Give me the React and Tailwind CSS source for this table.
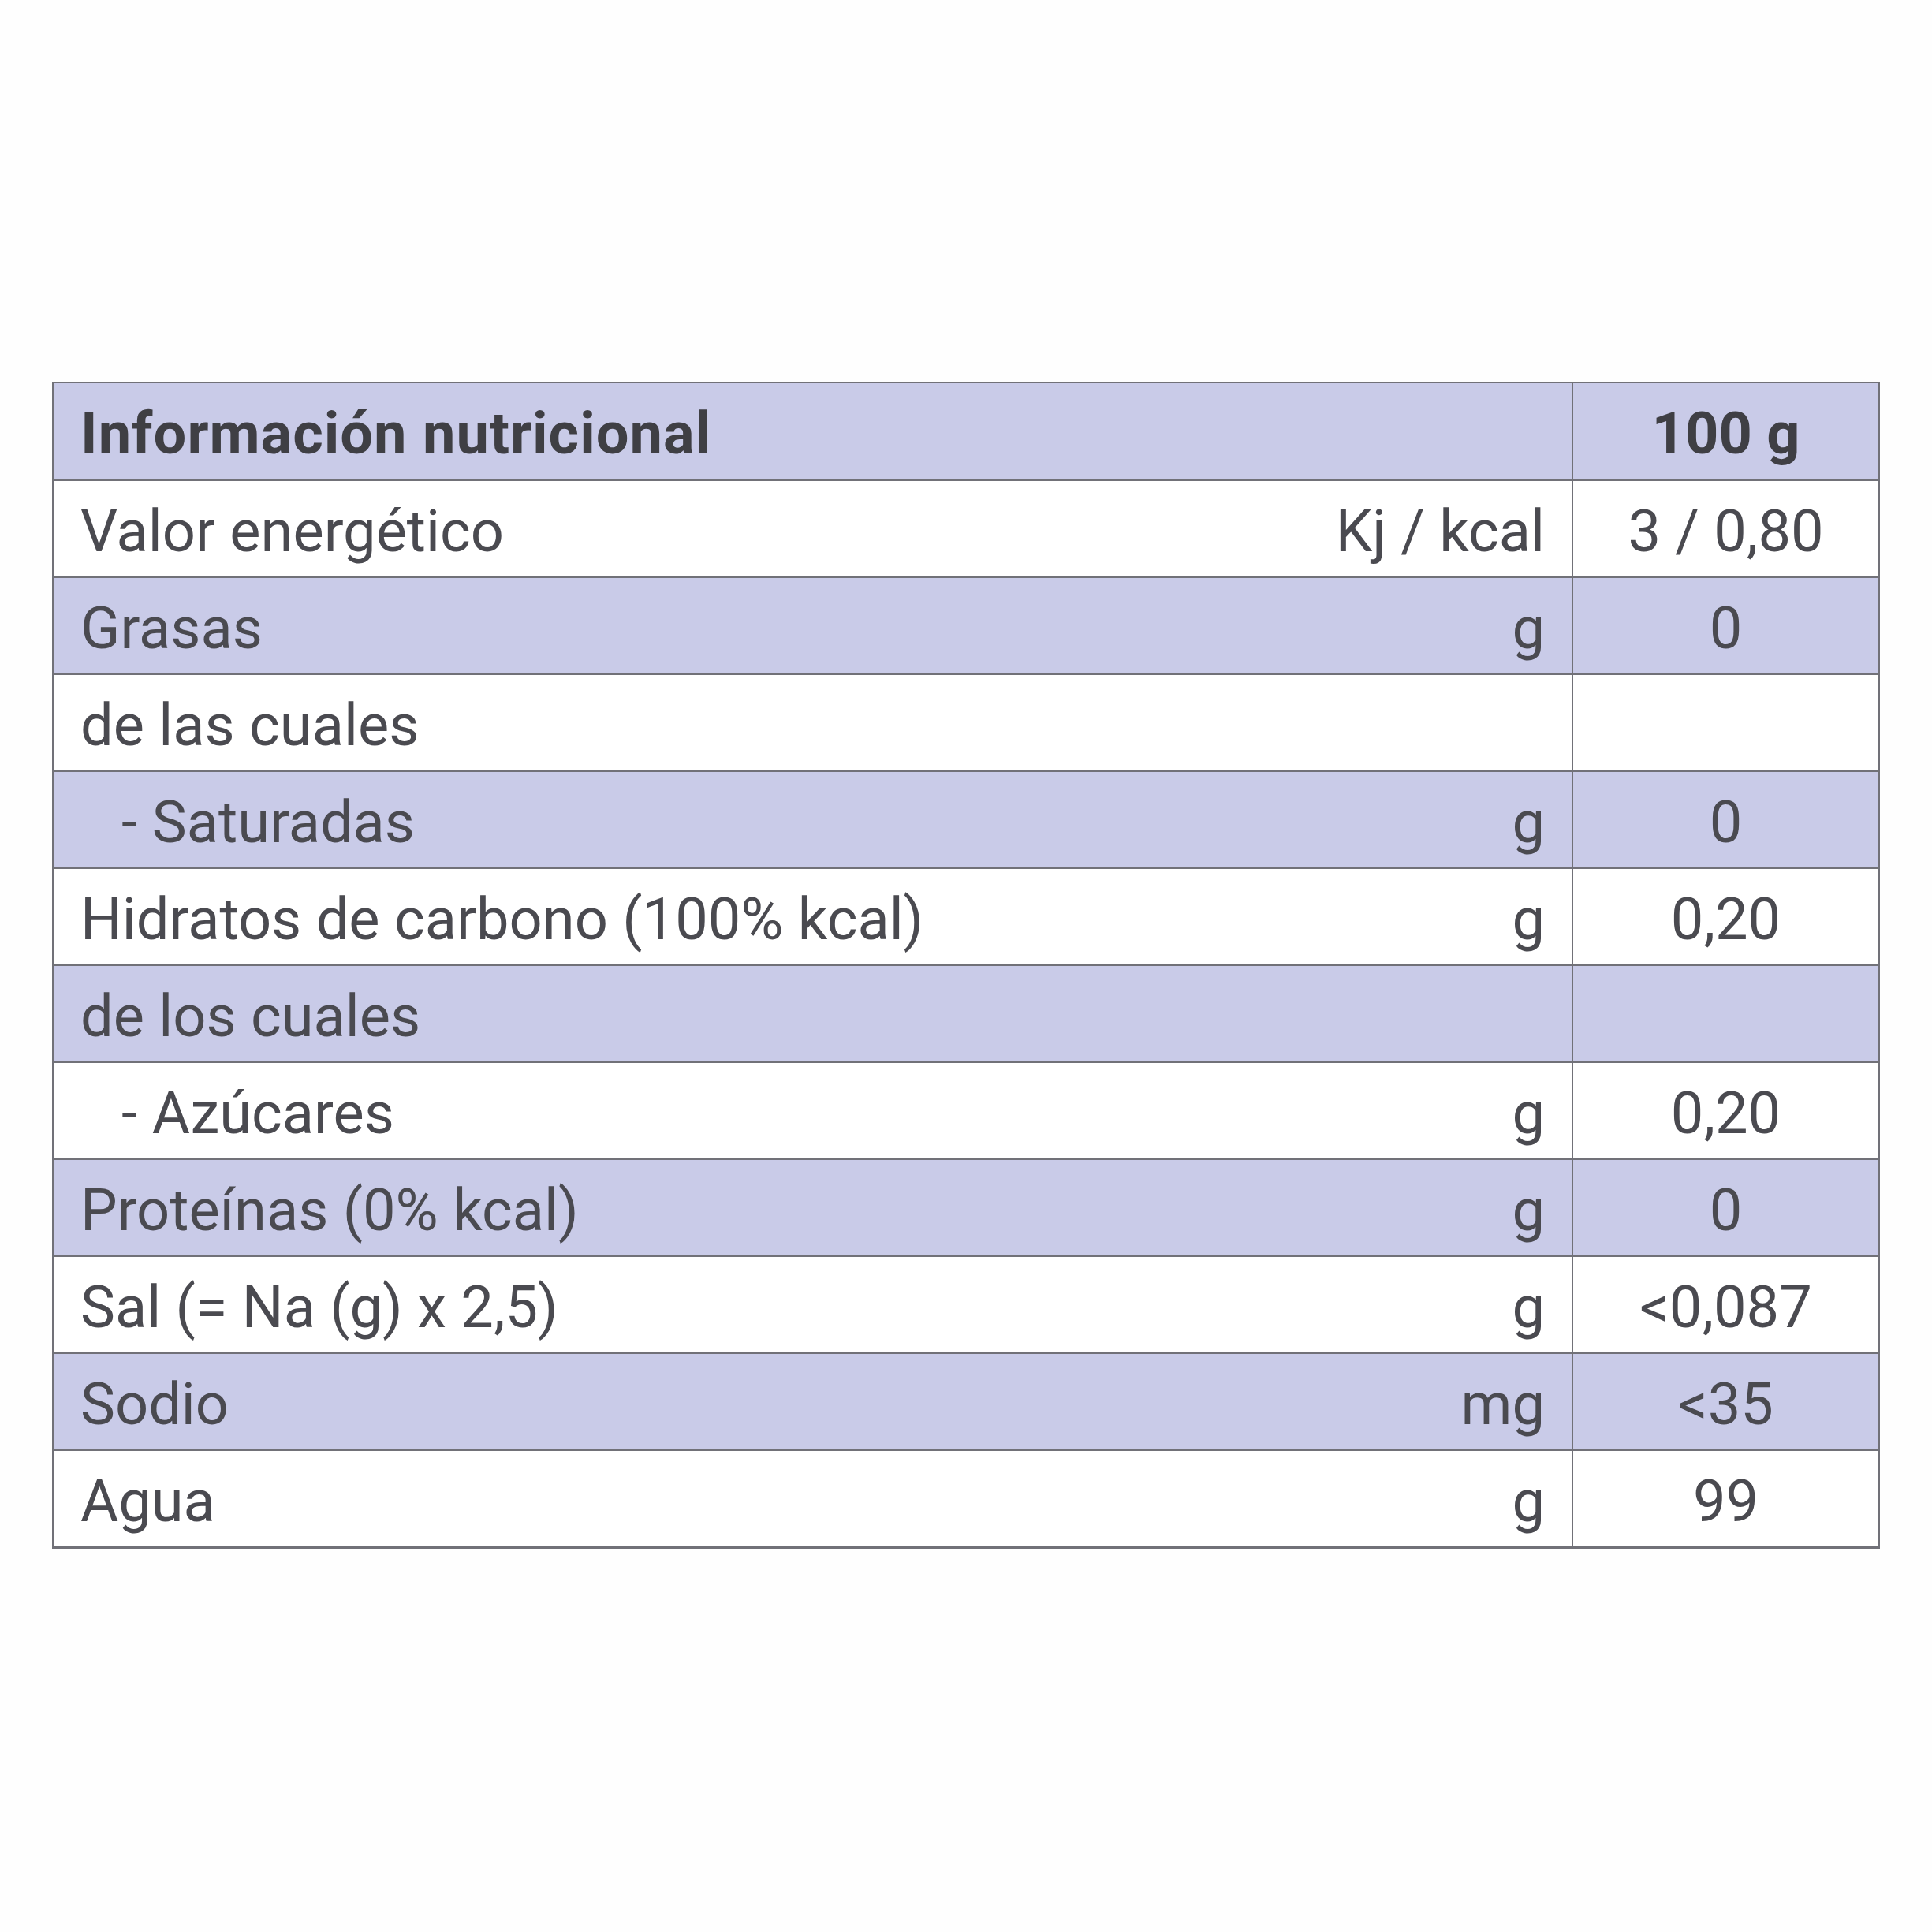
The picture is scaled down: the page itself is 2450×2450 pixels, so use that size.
const rows = [
  { label: "Valor energético", unit: "Kj / kcal", value: "3 / 0,80", shaded: false },
  { label: "Grasas", unit: "g", value: "0", shaded: true },
  { label: "de las cuales", unit: "", value: "", shaded: false },
  { label: "- Saturadas", unit: "g", value: "0", shaded: true, indent: true },
  { label: "Hidratos de carbono (100% kcal)", unit: "g", value: "0,20", shaded: false },
  { label: "de los cuales", unit: "", value: "", shaded: true },
  { label: "- Azúcares", unit: "g", value: "0,20", shaded: false, indent: true },
  { label: "Proteínas (0% kcal)", unit: "g", value: "0", shaded: true },
  { label: "Sal (= Na (g) x 2,5)", unit: "g", value: "<0,087", shaded: false },
  { label: "Sodio", unit: "mg", value: "<35", shaded: true },
  { label: "Agua", unit: "g", value: "99", shaded: false },
];

function Row({ row }) {
  return (
    <div
      className={`grid grid-cols-[1927px_1fr] h-[123px] border-t-2 border-[#717178] ${
        row.shaded ? "bg-[#c9cbe8]" : "bg-white"
      }`}
    >
      <div className="flex items-center justify-between pt-[6px] pl-[34px] pr-[34px] border-r-2 border-[#717178]">
        <span className={row.indent ? "pl-[52px]" : ""}>{row.label}</span>
        <span>{row.unit}</span>
      </div>
      <div className="flex items-center justify-center pt-[6px]">{row.value}</div>
    </div>
  );
}

export default function App() {
  return (
    <div className="w-[2450px] h-[2450px] bg-[#fefefe] pt-[484px] pl-[66px]">
      <div
        className="w-[2318px] border-2 border-t-0 border-b-[3px] border-[#717178] text-[74px] text-[#4a4a50] leading-none"
        style={{ fontFamily: "Roboto, 'Liberation Sans', sans-serif" }}
      >
        {/* header */}
        <div className="grid grid-cols-[1927px_1fr] h-[124px] border-t-2 border-[#717178] bg-[#c9cbe8] font-bold text-[#3f3f44]">
          <div className="flex items-center pt-[6px] pl-[34px] border-r-2 border-[#717178] tracking-[1px]">
            Información nutricional
          </div>
          <div className="flex items-center justify-center pt-[6px]">100 g</div>
        </div>
        {rows.map((row) => (
          <Row key={row.label} row={row} />
        ))}
      </div>
    </div>
  );
}
